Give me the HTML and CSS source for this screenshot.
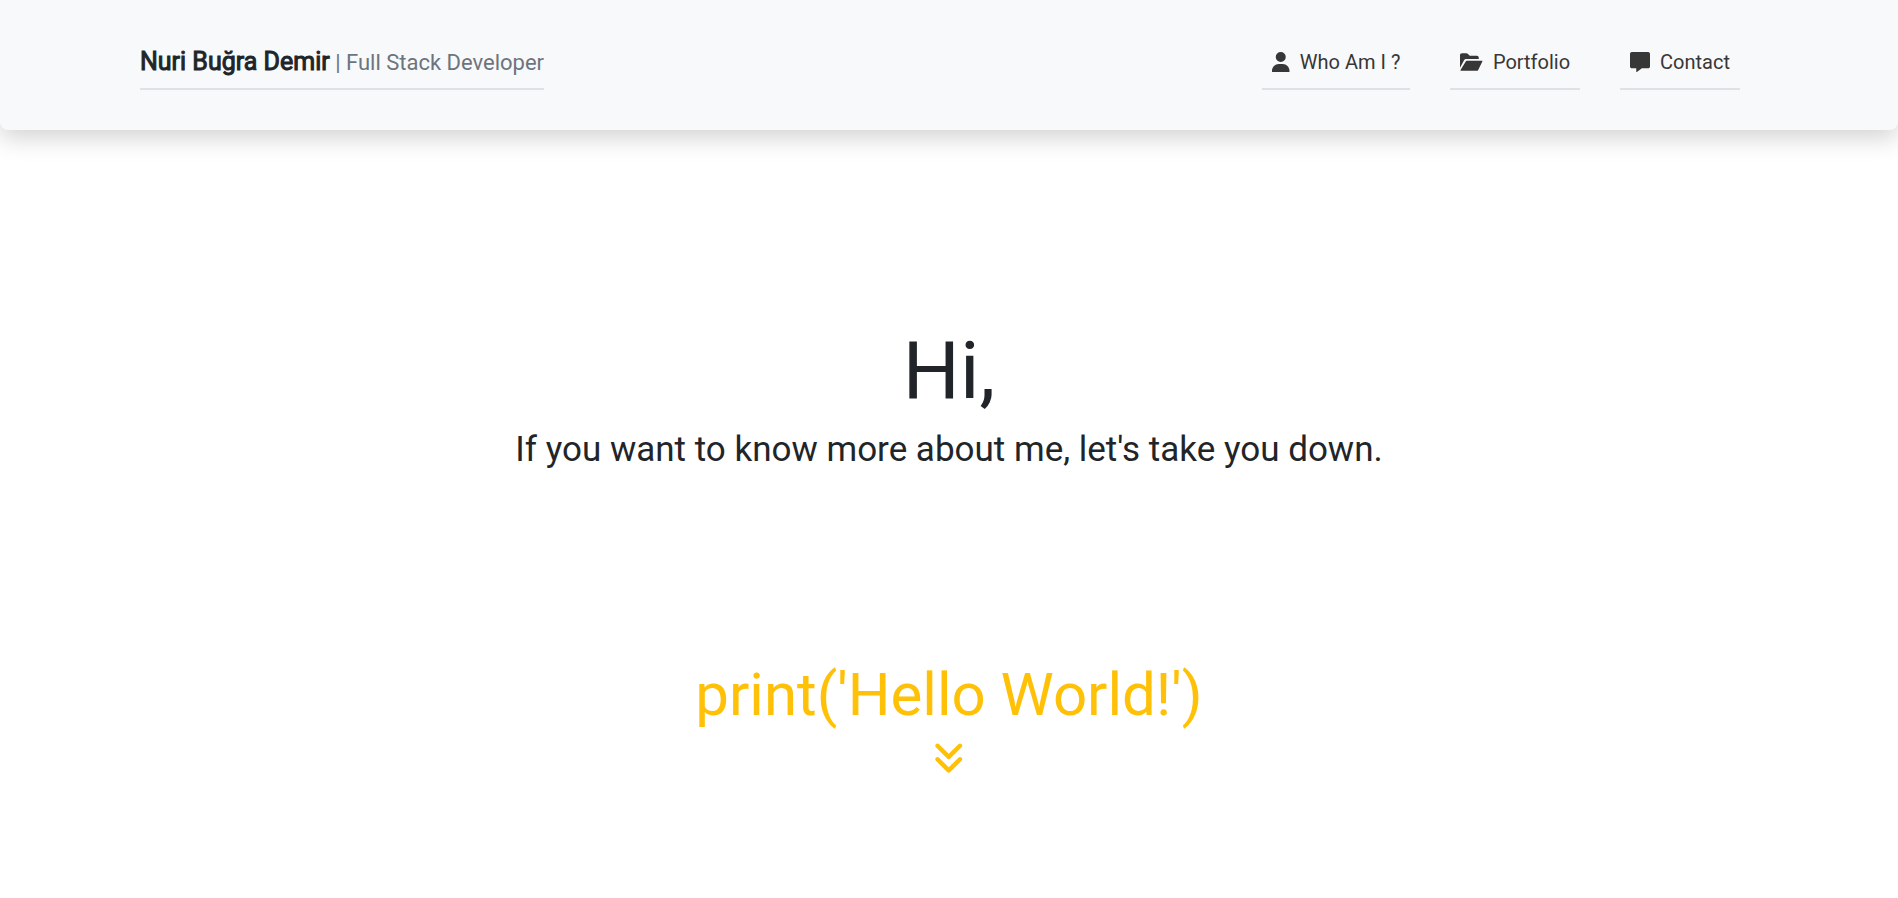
FILE: index.html
```html
<!DOCTYPE html>
<html lang="en">
<head>
<meta charset="utf-8">
<title>Nuri Buğra Demir</title>
<link rel="stylesheet" href="styles.css">
</head>
<body>
<header class="site-header">
  <a class="brand" href="#"><strong class="brand-name">Nuri Buğra Demir</strong> <span class="brand-role">| Full Stack Developer</span></a>
  <nav class="site-nav">
    <a class="nav-link" href="#about"><svg class="icon" viewBox="0 0 448 512" aria-hidden="true"><path d="M224 256A128 128 0 1 0 224 0a128 128 0 1 0 0 256zM174 304C78 304 0 382 0 478V496c0 9 7 16 16 16H432c9 0 16-7 16-16V478C448 382 370 304 274 304z"/></svg>Who Am I ?</a>
    <a class="nav-link" href="#portfolio"><svg class="icon" viewBox="0 0 576 512" aria-hidden="true"><path d="M147 240c6-10 17-16 28-16H560c12 0 18 8 12 18L462 464c-5 10-16 16-28 16H28c-12 0-20-8-14-18zM0 400V80c0-26 22-48 48-48H160c17 0 33 7 45 19l45 45H432c26 0 48 22 48 48v32H160c-23 0-44 12-56 32z"/></svg>Portfolio</a>
    <a class="nav-link" href="#contact"><svg class="icon" viewBox="0 0 512 512" aria-hidden="true"><path d="M48 0C21 0 0 21 0 48V368c0 27 21 48 48 48H160v80c0 14 14 20 25 12L304 416H464c27 0 48-21 48-48V48c0-27-21-48-48-48H48z"/></svg>Contact</a>
  </nav>
</header>
<main class="hero">
  <h1 class="greeting">Hi,</h1>
  <p class="lead">If you want to know more about me, let's take you down.</p>
  <a class="down" href="#about"><span>print('Hello World!')</span><svg class="down-icon" viewBox="0 0 448 512" aria-hidden="true"><path d="M246.600 470.600c-12.500 12.500-32.800 12.500-45.300 0l-160-160c-12.500-12.500-12.500-32.800 0-45.300s32.800-12.500 45.300 0L224 402.700 361.400 265.400c12.500-12.500 32.800-12.500 45.300 0s12.500 32.800 0 45.300l-160 160zm160-352l-160 160c-12.500 12.500-32.800 12.500-45.300 0l-160-160c-12.500-12.500-12.500-32.800 0-45.300s32.800-12.500 45.300 0L224 210.700 361.400 73.400c12.500-12.500 32.800-12.500 45.300 0s12.500 32.800 0 45.300z"/></svg></a>
</main>
</body>
</html>
```
FILE: styles.css
```css
* {
  box-sizing: border-box;
}

body {
  margin: 0;
  background: #fff;
  color: #212529;
  font-family: Roboto, sans-serif;
  font-weight: 400;
}

a {
  color: inherit;
  text-decoration: none;
}

.site-header {
  display: flex;
  justify-content: space-between;
  align-items: center;
  padding: 40px 158px 40px 140px;
  background: #f8f9fb;
  border-radius: 0 0 8px 8px;
  box-shadow: 0 8px 24px rgba(0, 0, 0, .175);
}

.brand,
.nav-link {
  height: 50px;
  padding-bottom: 4px;
  border-bottom: 2px solid #dee2e6;
  line-height: 44px;
  white-space: nowrap;
}

.brand {
  font-size: 22px;
}

.brand-name {
  font-size: 25px;
  font-weight: 400;
  -webkit-text-stroke: 1px currentColor;
}

.brand-role {
  color: #6c757d;
}

.site-nav {
  display: flex;
  gap: 40px;
}

.nav-link {
  display: flex;
  align-items: center;
  gap: 10px;
  padding-left: 10px;
  padding-right: 10px;
  color: #373737;
  font-size: 20px;
}

.icon {
  height: 20px;
  fill: currentColor;
}

.hero {
  display: flex;
  flex-direction: column;
  align-items: center;
  padding: 193px 24px 96px;
  text-align: center;
}

.greeting {
  margin: 0;
  font-size: 80px;
  font-weight: 400;
  line-height: 96px;
}

.lead {
  margin: 4px 0 0;
  font-size: 35px;
  line-height: 54px;
}

.down {
  display: flex;
  flex-direction: column;
  align-items: center;
  gap: 8px;
  margin-top: 182px;
  color: #ffc107;
  font-size: 60px;
  line-height: 72px;
}

.down-icon {
  height: 36px;
  fill: currentColor;
}
```
